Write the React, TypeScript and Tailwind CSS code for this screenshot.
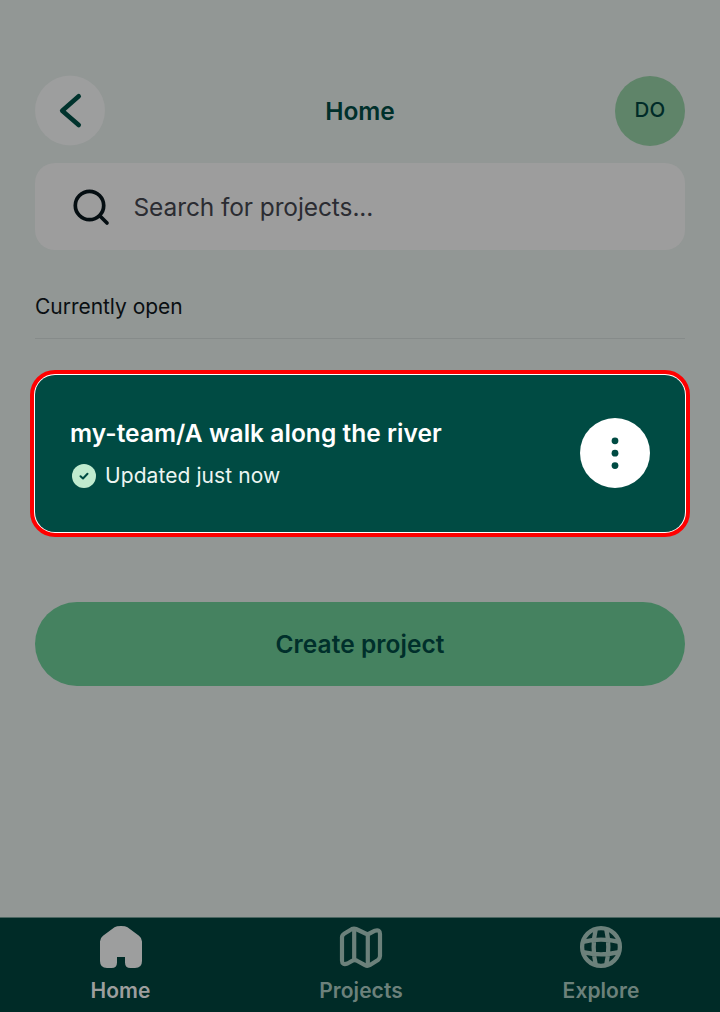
function ProjectsIcon() {
  return (
    <svg className="h-[44px] w-[44px]" viewBox="0 0 44 44" fill="none" stroke="currentColor" strokeWidth="4.200" strokeLinejoin="round">
      <path d="M3 12.500Q3 10 5.500 8.500L13 4Q15 3 17 4L26.500 8.500Q28.500 9.500 30.500 8.500L36 5.700Q41 4.200 41 9V31Q41 33.500 39 35L31 40Q28.500 41.500 26 40.200L17.500 35.500Q15.500 34.500 13.500 35.700L8.500 38.500Q3 40.500 3 35.500Z" />
      <path d="M15.200 4V34M28.800 10V40" />
    </svg>
  );
}

function ExploreIcon() {
  return (
    <svg className="h-[44px] w-[44px]" viewBox="0 0 44 44" fill="none" stroke="currentColor" strokeWidth="4.300">
      <circle cx="22" cy="22" r="18.900" />
      <path d="M16.800 4Q12.500 22 16.800 40M27.200 4Q31.500 22 27.200 40M4 16.800Q22 12.500 40 16.800M4 27.200Q22 31.500 40 27.200" />
    </svg>
  );
}

function HomeIcon() {
  return (
    <svg className="h-[44px] w-[44px]" viewBox="0 0 44 44" fill="currentColor">
      <path d="M15.500 2.300Q17.500 1 22 1Q26.500 1 28.500 2.300L40 10.700Q43 13 43 16.500V36Q43 43 36 43H31.500Q26 43 26 37.500V32H18V37.500Q18 43 12.500 43H8Q1 43 1 36V16.500Q1 13 4 10.700Z" />
    </svg>
  );
}

export default function App() {
  return (
    <div className="flex h-[1012px] w-[720px] flex-col overflow-hidden bg-[#929795] font-['Inter',sans-serif]">
      <header className="mx-[35px] mt-[75px] flex h-[71px] items-center justify-between">
        <button className="flex h-[71px] w-[70px] items-start justify-center text-[#00332d]">
          <svg className="h-[71px] w-[70px]" viewBox="0 0 70 71" fill="none" stroke="currentColor" strokeWidth="4.600" strokeLinecap="round" strokeLinejoin="round">
            <circle cx="35" cy="35.500" r="35" fill="#9d9e9e" stroke="none" />
            <path d="M43.700 21.200L27.200 35.700L43.700 50" />
          </svg>
        </button>
        <h1 className="text-[24.5px] font-semibold leading-[30px] tracking-[-0.1px] text-[#00302b]">Home</h1>
        <div className="flex h-[70px] w-[70px] items-center justify-center rounded-full bg-[#5f8469] text-[20.5px] font-medium tracking-[0.3px] text-[#002b28]">DO</div>
      </header>

      <div className="mx-[35px] mt-[17px] flex h-[87px] shrink-0 items-center rounded-[20px] bg-[#9d9d9d] pl-[37px]">
        <svg className="h-[38px] w-[38px] text-[#050e12]" viewBox="0 0 38 38" fill="none" stroke="currentColor" strokeWidth="3.700" strokeLinecap="round">
          <circle cx="17.500" cy="17.500" r="14.200" />
          <path d="M28 28L35 35" />
        </svg>
        <span className="ml-[23.500px] text-[24.5px] leading-[32px] tracking-[-0.1px] text-[#2b2c32]">Search for projects...</span>
      </div>

      <h2 className="mx-[35px] mt-[43px] h-[46px] shrink-0 border-b border-[#868b8a] text-[21px] leading-[28px] tracking-[-0.03px] text-[#0a0f12]">Currently open</h2>

      <section className="mx-[30px] mt-[31px] h-[167px] shrink-0 rounded-[25px] border-4 border-[#ff0000] bg-white p-[1px]">
        <div className="flex h-full items-center justify-between rounded-[20px] bg-[#004b43] pl-[35px] pr-[35px]">
          <div className="pt-[1px] text-white">
            <h3 className="text-[24.5px] font-semibold leading-[32px] tracking-[0.05px]">my-team/A walk along the river</h3>
            <p className="mt-[12px] flex items-center text-[21px] leading-[30px] tracking-[0.08px] text-[#edf5f1]">
              <svg className="mr-[7px] h-[28px] w-[28px]" viewBox="0 0 28 28">
                <circle cx="14" cy="14" r="12" fill="#c0ebcf" />
                <path d="M10.500 14.200L13 16.500L17.500 11.800" fill="none" stroke="#004b43" strokeWidth="2" strokeLinecap="round" strokeLinejoin="round" />
              </svg>
              Updated just now
            </p>
          </div>
          <button className="mb-[1px] flex h-[70px] w-[70px] items-center justify-center rounded-full bg-white text-[#004b43]">
            <svg className="h-[70px] w-[70px]" viewBox="0 0 70 70" fill="currentColor">
              <circle cx="35" cy="22.800" r="3.400" />
              <circle cx="35" cy="35.200" r="3.400" />
              <circle cx="35" cy="47.600" r="3.400" />
            </svg>
          </button>
        </div>
      </section>

      <button className="mx-[35px] mt-[65px] h-[84px] shrink-0 rounded-full bg-[#458260] pt-[1px] text-[24.5px] font-semibold tracking-[0.06px] text-[#002f2b]">Create project</button>

      <nav className="mt-auto grid h-[95px] shrink-0 grid-cols-3 border-t border-[#4b6661] bg-[#002b27] text-[21px] font-semibold leading-[28px] tracking-[0.06px] text-[#6c817b]">
        <a className="flex flex-col items-center pl-[1px] pt-[7px] text-[#9d9e9e]">
          <HomeIcon />
          <span className="mt-[7.500px]">Home</span>
        </a>
        <a className="flex flex-col items-center pl-[2px] pt-[7px]">
          <ProjectsIcon />
          <span className="mt-[7.500px]">Projects</span>
        </a>
        <a className="flex flex-col items-center pl-[2px] pt-[7px]">
          <ExploreIcon />
          <span className="mt-[7.500px]">Explore</span>
        </a>
      </nav>
    </div>
  );
}
